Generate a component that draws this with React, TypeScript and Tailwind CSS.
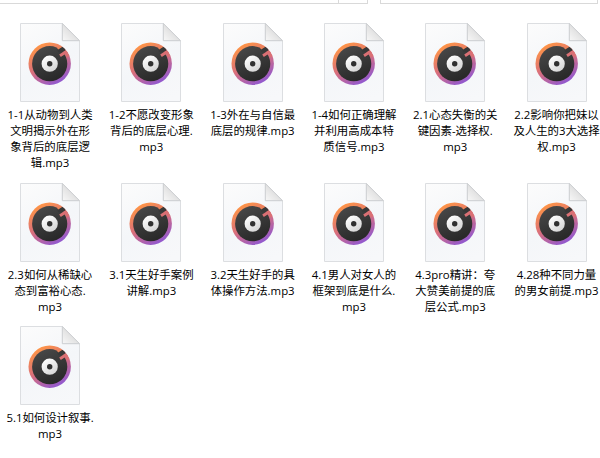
import React from 'react';

interface AudioFile {
  id: string;
  lines: string[];
}

const ROWS: { className: string; files: AudioFile[] }[] = [
  {
    className: 'h-[159.5px]',
    files: [
      { id: '1-1', lines: ['1-1从动物到人类', '文明揭示外在形', '象背后的底层逻', '辑.mp3'] },
      { id: '1-2', lines: ['1-2不愿改变形象', '背后的底层心理.', 'mp3'] },
      { id: '1-3', lines: ['1-3外在与自信最', '底层的规律.mp3'] },
      { id: '1-4', lines: ['1-4如何正确理解', '并利用高成本特', '质信号.mp3'] },
      { id: '2.1', lines: ['2.1心态失衡的关', '键因素-选择权.', 'mp3'] },
      { id: '2.2', lines: ['2.2影响你把妹以', '及人生的3大选择', '权.mp3'] },
    ],
  },
  {
    className: 'h-[143.5px]',
    files: [
      { id: '2.3', lines: ['2.3如何从稀缺心', '态到富裕心态.', 'mp3'] },
      { id: '3.1', lines: ['3.1天生好手案例', '讲解.mp3'] },
      { id: '3.2', lines: ['3.2天生好手的具', '体操作方法.mp3'] },
      { id: '4.1', lines: ['4.1男人对女人的', '框架到底是什么.', 'mp3'] },
      { id: '4.3', lines: ['4.3pro精讲：夸', '大赞美前提的底', '层公式.mp3'] },
      { id: '4.28', lines: ['4.28种不同力量', '的男女前提.mp3'] },
    ],
  },
  {
    className: 'h-[130px]',
    files: [{ id: '5.1', lines: ['5.1如何设计叙事.', 'mp3'] }],
  },
];

const AudioIcon: React.FC<{ id: string }> = ({ id }) => (
  <svg className="block w-[60px] h-[79px] shrink-0" viewBox="0 0 60 79" fill="none">
    <defs>
      <linearGradient id={`page-${id}`} x1="0" y1="0" x2="45" y2="79" gradientUnits="userSpaceOnUse">
        <stop stopColor="#fcfcfc" />
        <stop offset="0.55" stopColor="#f4f6f9" />
        <stop offset="1" stopColor="#f7f8fa" />
      </linearGradient>
      <linearGradient id={`fold-${id}`} x1="43" y1="17" x2="53" y2="7" gradientUnits="userSpaceOnUse">
        <stop stopColor="#f6f6f6" />
        <stop offset="1" stopColor="#dcdcdc" />
      </linearGradient>
      <linearGradient id={`ring-${id}`} x1="18" y1="22" x2="39" y2="60" gradientUnits="userSpaceOnUse">
        <stop stopColor="#ff9545" />
        <stop offset="0.5" stopColor="#d96f7c" />
        <stop offset="1" stopColor="#9158d0" />
      </linearGradient>
      <linearGradient id={`disc-${id}`} x1="22" y1="23" x2="38" y2="59" gradientUnits="userSpaceOnUse">
        <stop stopColor="#484848" />
        <stop offset="1" stopColor="#262626" />
      </linearGradient>
      <linearGradient id={`hub-${id}`} x1="24" y1="34" x2="35" y2="49" gradientUnits="userSpaceOnUse">
        <stop stopColor="#ffffff" />
        <stop offset="1" stopColor="#d2d2d2" />
      </linearGradient>
      <clipPath id={`clip-${id}`}>
        <circle cx="29.7" cy="40.7" r="21.2" />
      </clipPath>
    </defs>
    <path d="M.5 .5H42.3L59.5 17.7V78.5H.5Z" fill={`url(#page-${id})`} stroke="#dcdee1" />
    <path d="M42.3 .5V17.7H59.5Z" fill={`url(#fold-${id})`} stroke="#cbcdd0" strokeLinejoin="round" />
    <circle cx="29.7" cy="40.7" r="21.2" fill={`url(#ring-${id})`} />
    <circle cx="29.7" cy="40.7" r="17.6" fill={`url(#disc-${id})`} />
    {/* tonearm */}
    <g clipPath={`url(#clip-${id})`}>
      <path d="M37.5 26.6L40.8 24.2L43.3 23.5L46.3 27L42.6 29.6L38 29Z" fill="#383838" />
      <path d="M37.6 25.6L41.2 23.4" stroke="#ec8258" strokeWidth="2.2" />
      <path d="M39.2 31.4L45.6 27.2L47.6 28.2L49.6 33.2L46.8 34.2L45.4 31L40.8 33.9Z" fill="#da7074" />
    </g>
    <circle cx="29.7" cy="40.7" r="8.1" fill={`url(#hub-${id})`} />
    <circle cx="29.7" cy="40.7" r="2.7" fill="#303030" />
  </svg>
);

const FileItem: React.FC<{ file: AudioFile }> = ({ file }) => (
  <div className="flex flex-col items-center w-[101.3px] shrink-0">
    <AudioIcon id={file.id} />
    <div className="mt-[5px] text-center text-[11.4px] leading-[16px] text-black whitespace-nowrap">
      {file.lines.map((line) => (
        <div key={line}>{line}</div>
      ))}
    </div>
  </div>
);

export default function App() {
  return (
    <div className="w-[600px] h-[458px] overflow-hidden bg-white font-['Open_Sans','Noto_Sans_CJK_SC',sans-serif]">
      {/* bottom edge of the address and search boxes */}
      <header className="flex h-[23px] items-start">
        <div className="flex w-[368px] h-1 border-b border-r border-[#d9d9d9]">
          <div className="w-[339px] border-r border-[#d9d9d9]" />
        </div>
        <div className="ml-3 w-[218px] h-1 border-b border-x border-[#d9d9d9]" />
      </header>

      <main className="-ml-[0.6px]">
        {ROWS.map((row) => (
          <div key={row.className} className={`flex items-start ${row.className}`}>
            {row.files.map((file) => (
              <FileItem key={file.id} file={file} />
            ))}
          </div>
        ))}
      </main>
    </div>
  );
}
